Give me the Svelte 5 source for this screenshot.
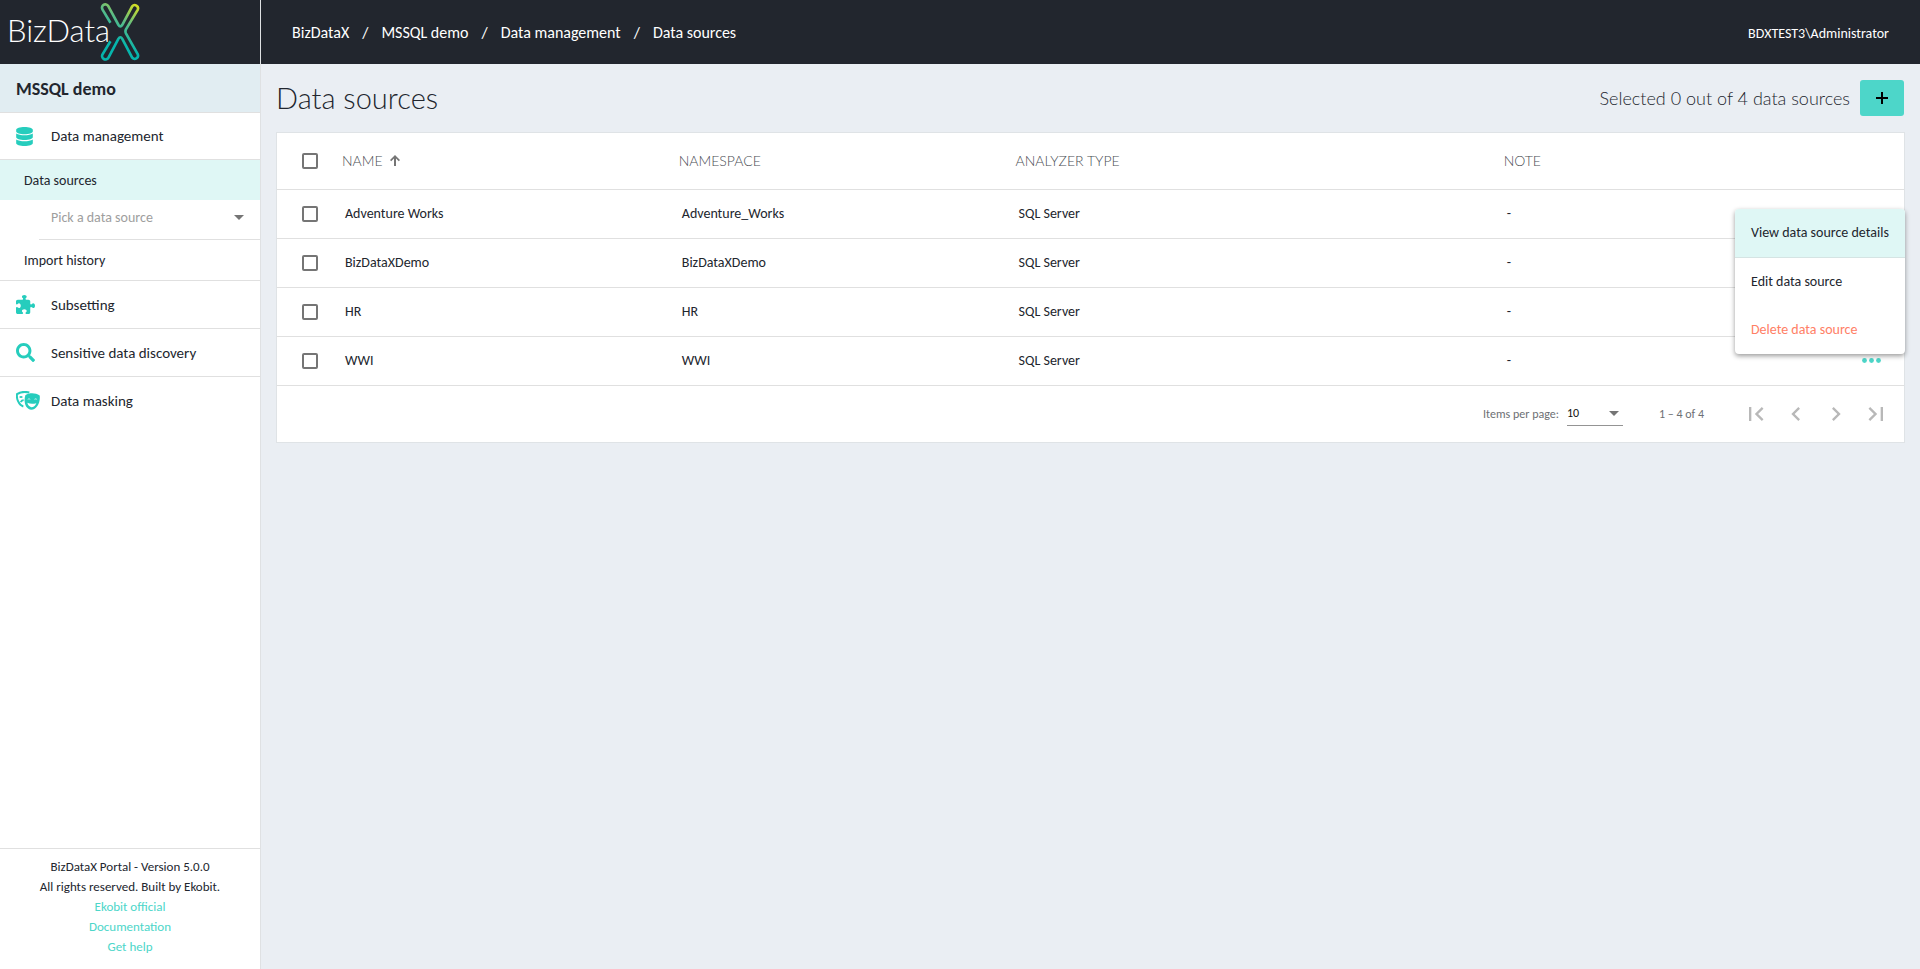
<script>
  let perPage = $state('10');
  let picked = $state('');

  const crumbs = ['BizDataX', 'MSSQL demo', 'Data management', 'Data sources'];

  const sources = [
    { name: 'Adventure Works', namespace: 'Adventure_Works', type: 'SQL Server', note: '-' },
    { name: 'BizDataXDemo', namespace: 'BizDataXDemo', type: 'SQL Server', note: '-' },
    { name: 'HR', namespace: 'HR', type: 'SQL Server', note: '-' },
    { name: 'WWI', namespace: 'WWI', type: 'SQL Server', note: '-' }
  ];

  let selected = $state(sources.map(() => false));
  let count = $derived(selected.filter(Boolean).length);
  let menuRow = $state(3);

  function toggleAll(e) {
    selected = sources.map(() => e.target.checked);
  }

  const pageButtons = [
    { label: 'First page', path: 'M18.41 16.59L13.82 12l4.59-4.59L17 6l-6 6 6 6zM6 6h2v12H6z' },
    { label: 'Previous page', path: 'M15.41 7.41L14 6l-6 6 6 6 1.41-1.41L10.83 12z' },
    { label: 'Next page', path: 'M10 6L8.59 7.41 13.17 12l-4.58 4.59L10 18l6-6z' },
    { label: 'Last page', path: 'M5.59 7.41L10.18 12l-4.59 4.59L7 18l6-6-6-6zM16 6h2v12h-2z' }
  ];
</script>

<div class="app">
  <header class="topbar">
    <a class="logo" href="#home" aria-label="BizDataX">
      <span>BizData</span>
      <svg viewBox="300 8 120 176" width="40" height="58">
        <defs>
          <linearGradient id="xfill" gradientUnits="userSpaceOnUse" x1="410" y1="16" x2="345" y2="120">
            <stop offset="0" stop-color="#d0dc25" />
            <stop offset="0.5" stop-color="#5cbb86" />
            <stop offset="1" stop-color="#06b5ac" />
          </linearGradient>
        </defs>
        <path
          d="M331 68 L307 28 A10 10 0 0 1 324 17 L355 74 Q361 84 367 74 L397 18 A10 10 0 0 1 414 28 L378 88 Q375 94 378 100 L414 164 A10 10 0 0 1 397 174 L367 117 Q361 107 355 117 L325 174 A10 10 0 0 1 307 164 L331 124"
          fill="none" stroke="url(#xfill)" stroke-width="8" />
      </svg>
    </a>
    <nav class="crumbs">
      {#each crumbs as crumb, i}
        {#if i > 0}<span>/</span>{/if}
        <a href="#crumb">{crumb}</a>
      {/each}
    </nav>
    <div class="user">BDXTEST3\Administrator</div>
  </header>

  <aside class="sidebar">
    <div class="project">MSSQL demo</div>
    <nav>
      <a class="item first" href="#management">
        <svg viewBox="0 0 448 512" width="17" height="19">
          <path d="M448 73.143v45.714C448 159.143 347.667 192 224 192S0 159.143 0 118.857V73.143C0 32.857 100.333 0 224 0s224 32.857 224 73.143zM448 176v102.857C448 319.143 347.667 352 224 352S0 319.143 0 278.857V176c48.125 33.143 136.208 48.572 224 48.572S399.874 209.143 448 176zm0 160v102.857C448 479.143 347.667 512 224 512S0 479.143 0 438.857V336c48.125 33.143 136.208 48.572 224 48.572S399.874 369.143 448 336z" />
        </svg>
        <span>Data management</span>
      </a>
      <a class="sub active" href="#sources">Data sources</a>
      <div class="picker">
        <select bind:value={picked} aria-label="Pick a data source">
          <option value="">Pick a data source</option>
          {#each sources as source}
            <option value={source.name}>{source.name}</option>
          {/each}
        </select>
        <svg viewBox="0 0 10 5" width="10" height="5"><path d="M0 0h10L5 5z" /></svg>
      </div>
      <a class="sub last" href="#history">Import history</a>
      <a class="item" href="#subsetting">
        <svg viewBox="0 0 512 512" width="19" height="19">
          <path d="M192 104.800c0-9.200-5.800-17.300-13.200-22.800C167.200 73.300 160 61.300 160 48c0-26.500 28.700-48 64-48s64 21.500 64 48c0 13.300-7.200 25.300-18.800 34c-7.400 5.500-13.200 13.600-13.200 22.800c0 12.800 10.400 23.200 23.200 23.200H336c26.500 0 48 21.500 48 48v56.800c0 12.800 10.400 23.200 23.200 23.200c9.200 0 17.300-5.800 22.800-13.200c8.700-11.600 20.700-18.800 34-18.800c26.500 0 48 28.700 48 64s-21.500 64-48 64c-13.300 0-25.300-7.200-34-18.800c-5.500-7.400-13.600-13.200-22.800-13.200c-12.800 0-23.200 10.400-23.200 23.200V464c0 26.500-21.500 48-48 48H279.200c-12.800 0-23.200-10.400-23.200-23.200c0-9.200 5.800-17.300 13.200-22.800c11.600-8.700 18.800-20.700 18.800-34c0-26.500-28.700-48-64-48s-64 21.500-64 48c0 13.300 7.200 25.300 18.800 34c7.400 5.500 13.200 13.600 13.200 22.800c0 12.800-10.400 23.200-23.200 23.200H48c-26.500 0-48-21.500-48-48V343.200C0 330.400 10.400 320 23.200 320c9.200 0 17.300 5.800 22.800 13.200C54.700 344.800 66.700 352 80 352c26.500 0 48-28.700 48-64s-21.500-64-48-64c-13.300 0-25.300 7.200-34 18.800C40.500 250.200 32.400 256 23.200 256C10.400 256 0 245.600 0 232.800V176c0-26.500 21.500-48 48-48H168.800c12.800 0 23.200-10.400 23.200-23.200z" />
        </svg>
        <span>Subsetting</span>
      </a>
      <a class="item" href="#discovery">
        <svg viewBox="0 0 512 512" width="19" height="19">
          <path d="M505 442.700L405.300 343c-4.500-4.500-10.600-7-17-7H372c27.600-35.300 44-79.700 44-128C416 93.100 322.900 0 208 0S0 93.100 0 208s93.100 208 208 208c48.300 0 92.700-16.400 128-44v16.300c0 6.400 2.500 12.500 7 17l99.700 99.700c9.400 9.400 24.600 9.400 33.900 0l28.300-28.300c9.400-9.400 9.400-24.600.1-34zM208 336c-70.700 0-128-57.200-128-128 0-70.700 57.200-128 128-128 70.700 0 128 57.200 128 128 0 70.700-57.200 128-128 128z" />
        </svg>
        <span>Sensitive data discovery</span>
      </a>
      <a class="item plain" href="#masking">
        <svg viewBox="0 0 72 56" width="24" height="19">
          <path d="M22 46C8 42 1 22 3 9 12 3 28 1 40 4" fill="none" stroke="#26cdbd" stroke-width="6" />
          <path d="M11 19q4-4 8 0M14 33q3-6 9-6" fill="none" stroke="#26cdbd" stroke-width="5" />
          <path d="M28 12C40 4 58 4 71 13 74 34 62 54 46 56 28 53 22 32 28 12z" />
          <path d="M34 25q5-6 10 0-5-2-10 0zM54 25q5-6 10 0-5-2-10 0zM34 35q12 5 27 1-5 12-15 12-9-2-12-13z" fill="#fff" />
        </svg>
        <span>Data masking</span>
      </a>
    </nav>
    <footer>
      <div>BizDataX Portal - Version 5.0.0</div>
      <div>All rights reserved. Built by Ekobit.</div>
      <a href="#ekobit">Ekobit official</a>
      <a href="#docs">Documentation</a>
      <a href="#help">Get help</a>
    </footer>
  </aside>

  <main>
    <div class="heading">
      <h1>Data sources</h1>
      <span class="selected">Selected {count} out of 4 data sources</span>
      <button class="add" aria-label="Add data source">
        <svg viewBox="0 0 12 12" width="12" height="12"><path d="M5 0h2v5h5v2H7v5H5V7H0V5h5z" /></svg>
      </button>
    </div>

    <section class="card">
      <table>
        <thead>
          <tr>
            <th class="check"><input type="checkbox" aria-label="Select all" onchange={toggleAll} /></th>
            <th class="name">
              NAME
              <svg viewBox="0 0 10 11" width="10" height="11"><path d="M4 11V3.500L1.200 6.200 0 5l5-5 5 5-1.200 1.200L6 3.500V11z" /></svg>
            </th>
            <th class="namespace">NAMESPACE</th>
            <th class="type">ANALYZER TYPE</th>
            <th>NOTE</th>
            <th class="actions"></th>
          </tr>
        </thead>
        <tbody>
          {#each sources as source, i}
            <tr>
              <td class="check"><input type="checkbox" aria-label={source.name} bind:checked={selected[i]} /></td>
              <td>{source.name}</td>
              <td>{source.namespace}</td>
              <td>{source.type}</td>
              <td>{source.note}</td>
              <td class="actions">
                {#if menuRow === i}
                  <button class="dots" aria-label="Actions">
                    <svg viewBox="0 0 19 5" width="19" height="5">
                      <circle cx="2.500" cy="2.500" r="2.400" />
                      <circle cx="9.500" cy="2.500" r="2.400" />
                      <circle cx="16.500" cy="2.500" r="2.400" />
                    </svg>
                  </button>
                  <div class="menu">
                    <button class="hover">View data source details</button>
                    <button>Edit data source</button>
                    <button class="danger">Delete data source</button>
                  </div>
                {/if}
              </td>
            </tr>
          {/each}
        </tbody>
      </table>

      <div class="paginator">
        <label for="per-page">Items per page:</label>
        <div class="size">
          <select id="per-page" bind:value={perPage}>
            <option>5</option>
            <option>10</option>
            <option>20</option>
          </select>
          <svg viewBox="0 0 10 5" width="10" height="5"><path d="M0 0h10L5 5z" /></svg>
        </div>
        <span class="range">1 – 4 of 4</span>
        {#each pageButtons as button}
          <button aria-label={button.label} disabled>
            <svg viewBox="0 0 24 24" width="28" height="28"><path d={button.path} /></svg>
          </button>
        {/each}
      </div>
    </section>
  </main>
</div>

<style>
  :global(body) {
    font-family: Carlito, Lato, "Liberation Sans", sans-serif;
    font-size: 14px;
    color: #22262e;
    background: #eaeef3;
  }

  a {
    color: inherit;
    text-decoration: none;
  }

  button,
  select {
    font: inherit;
    color: inherit;
    border: 0;
    background: none;
    padding: 0;
  }

  select {
    appearance: none;
    width: 100%;
  }

  .app {
    display: grid;
    grid-template-columns: 261px 1fr;
    grid-template-rows: 64px 1fr;
    min-height: 100vh;
  }

  .topbar {
    grid-column: 1 / 3;
    display: flex;
    align-items: center;
    background: #22262e;
    color: #fff;
  }

  .logo {
    box-sizing: border-box;
    display: flex;
    align-items: center;
    width: 261px;
    height: 64px;
    padding-left: 7px;
    border-right: 1px solid #dfe1e3;
    font-family: Lato, sans-serif;
    font-size: 31px;
    font-weight: 300;
    line-height: 36px;
  }

  .logo span {
    padding-bottom: 4px;
  }

  .logo svg {
    margin-left: -10px;
  }

  .crumbs {
    display: flex;
    flex: 1;
    gap: 13px;
    padding: 1px 0 0 31px;
    font-size: 16px;
  }

  .user {
    padding: 2px 31px 0 0;
  }

  .sidebar {
    display: flex;
    flex-direction: column;
    background: #fff;
    border-right: 1px solid #dfe1e3;
  }

  .sidebar nav {
    flex: 1;
  }

  .project {
    height: 48px;
    line-height: 50px;
    padding-left: 16px;
    border-bottom: 1px solid #e0e0e0;
    background: #e1edf2;
    font-size: 18px;
    font-weight: 700;
  }

  .item {
    display: flex;
    align-items: center;
    height: 47px;
    padding-left: 16px;
    border-bottom: 1px solid #e0e0e0;
    font-size: 15px;
  }

  .item.first {
    height: 46px;
  }

  .item svg {
    fill: #26cdbd;
  }

  .item span {
    margin-left: auto;
    width: 209px;
  }

  .item.plain {
    border-bottom: 0;
  }

  .sub {
    display: block;
    height: 40px;
    line-height: 42px;
    padding-left: 24px;
  }

  .sub.active {
    background: #dff7f5;
  }

  .sub.last {
    border-bottom: 1px solid #e0e0e0;
  }

  .picker {
    box-sizing: border-box;
    display: flex;
    align-items: center;
    height: 40px;
    margin-left: 39px;
    padding: 0 16px 4px 12px;
    border-bottom: 1px solid #e0e0e0;
    color: #9e9e9e;
  }

  .picker svg,
  .size svg {
    flex: none;
    fill: #757575;
  }

  footer {
    display: flex;
    flex-direction: column;
    align-items: center;
    padding: 8px 0 12px;
    border-top: 1px solid #e0e0e0;
    font-size: 13px;
    line-height: 20px;
  }

  footer a {
    color: #4dd6c9;
  }

  main {
    padding: 16px 15px 16px;
  }

  .heading {
    display: flex;
    align-items: center;
    height: 36px;
    margin-bottom: 16px;
    font-family: Lato, sans-serif;
    font-weight: 300;
  }

  h1 {
    flex: 1;
    margin: 0;
    font-size: 29px;
    font-weight: 300;
    line-height: 34px;
  }

  .selected {
    margin-right: 10px;
    font-size: 18px;
  }

  .add {
    display: flex;
    align-items: center;
    justify-content: center;
    width: 44px;
    height: 36px;
    margin-right: 1px;
    border-radius: 3px;
    background: #4dd6c9;
  }

  .card {
    background: #fff;
    border: 1px solid #dfe3e6;
  }

  table {
    width: 100%;
    table-layout: fixed;
    border-collapse: collapse;
  }

  th,
  td {
    box-sizing: border-box;
    padding: 0;
    text-align: left;
    border-bottom: 1px solid #e0e0e0;
  }

  th {
    height: 56px;
    font-family: Lato, sans-serif;
    font-size: 14px;
    font-weight: 300;
    color: #4a4e54;
  }

  th svg {
    margin-left: 4px;
    fill: #757575;
  }

  td {
    height: 49px;
    padding: 0 0 0 3px;
  }

  .check {
    width: 65px;
    padding: 1px 0 0 25px;
  }

  .check input {
    appearance: none;
    display: block;
    width: 16px;
    height: 16px;
    margin: 0;
    border: 2px solid #757575;
    border-radius: 2px;
  }

  .check input:checked {
    background: #26cdbd;
  }

  .name,
  .namespace {
    width: 20.7%;
  }

  .type {
    width: 30%;
  }

  .actions {
    position: relative;
    width: 65px;
  }

  .dots {
    display: flex;
    align-items: center;
    height: 24px;
    margin-left: 20px;
  }

  .dots svg {
    fill: #4dd6c9;
  }

  .menu {
    position: absolute;
    right: -1px;
    bottom: 31px;
    z-index: 1;
    width: 170px;
    overflow: hidden;
    border-radius: 4px;
    background: #fff;
    box-shadow: 0 2px 5px rgba(0, 0, 0, 0.4);
  }

  .menu button {
    display: block;
    width: 100%;
    height: 48px;
    padding-left: 16px;
    text-align: left;
    white-space: nowrap;
  }

  .menu .hover {
    height: 49px;
    border-bottom: 1px solid #d5e4e3;
    background: #dff7f5;
  }

  .menu .danger {
    color: #ff8066;
  }

  .paginator {
    display: flex;
    align-items: center;
    justify-content: flex-end;
    height: 56px;
    padding-right: 8px;
    font-size: 12px;
    color: #6d7074;
  }

  .size {
    box-sizing: border-box;
    display: flex;
    align-items: center;
    width: 56px;
    height: 25px;
    margin: 0 36px 0 8px;
    padding-right: 4px;
    border-bottom: 1px solid #949494;
    color: #111;
  }

  .range {
    margin-right: 32px;
  }

  .paginator button {
    display: flex;
    align-items: center;
    justify-content: center;
    width: 40px;
    height: 40px;
  }

  .paginator button svg {
    fill: #b8b8b8;
  }
</style>
